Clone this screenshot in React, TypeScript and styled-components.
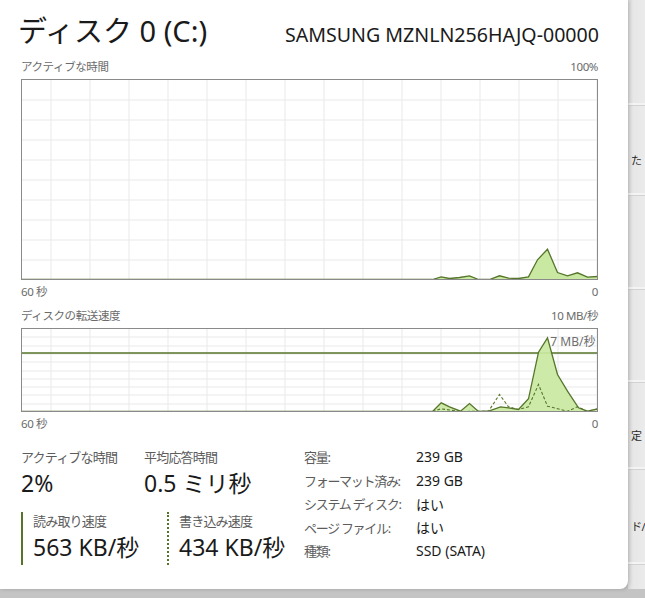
import styled, { createGlobalStyle } from 'styled-components';

const FONT = `"Noto Sans", "Noto Sans CJK JP", sans-serif`;
const GREEN_LINE = '#55752a';
const GREEN_FILL = '#c9e8a2';

const GlobalStyle = createGlobalStyle`
  html, body {
    margin: 0;
    padding: 0;
    background: #c4c4c4;
  }
  body {
    font-family: ${FONT};
    color: #1b1b1b;
  }
`;

type Pt = [number, number];

const activePoints: Pt[] = [
  [0, 200], [411, 200], [419.7, 197.3], [428, 199], [438, 198], [448, 196.3], [457, 200],
  [468, 200], [478, 196.3], [487, 198.7], [497, 199], [507, 197.3], [516, 180.3],
  [526, 169.7], [536, 193], [546, 196.3], [556, 193.3], [566, 197.7], [576, 197],
];

const readPoints: Pt[] = [
  [0, 83], [411, 83], [419.7, 74.3], [428, 78.3], [439, 82.7], [448, 75], [457, 83],
  [468, 82.3], [479, 78.3], [487, 79.3], [497, 81], [507, 70.3], [517, 23.7],
  [526, 9.3], [536, 46], [546, 62.7], [557, 79.3], [566, 82.7], [576, 80.3],
];

const writePoints: Pt[] = [
  [411, 83], [419.7, 80.3], [428, 81.5], [439, 83], [467, 82.7], [478, 66], [487, 78.3],
  [497, 81], [507, 78.3], [517, 56], [526, 77.7], [546, 82.7], [556, 78.3], [566, 83],
  [576, 80.3],
];

const props = [
  { label: '容量:', value: '239 GB' },
  { label: 'フォーマット済み:', value: '239 GB' },
  { label: 'システム ディスク:', value: 'はい' },
  { label: 'ページ ファイル:', value: 'はい' },
  { label: '種類:', value: 'SSD (SATA)' },
];

const toStr = (pts: Pt[]) => pts.map(([x, y]) => `${x},${y}`).join(' ');

const Grid = ({ width, height, rows }: { width: number; height: number; rows: number }) => {
  const lines = [];
  for (let x = 29; x < width; x += 39) {
    lines.push(<line key={`v${x}`} x1={x + 0.5} y1={0} x2={x + 0.5} y2={height} />);
  }
  for (let i = 1; i < rows; i++) {
    const y = Math.round((height / rows) * i) + 0.5;
    lines.push(<line key={`h${i}`} x1={0} y1={y} x2={width} y2={y} />);
  }
  return (
    <g stroke="#e9e9e9" strokeWidth={1}>
      {lines}
    </g>
  );
};

const ActiveChart = () => (
  <ChartSvg width={577} height={201} viewBox="-0.5 -0.5 577 201">
    <Grid width={576} height={200} rows={10} />
    <polygon points={toStr([...activePoints, [576, 200]])} fill={GREEN_FILL} />
    <polyline points={toStr(activePoints)} fill="none" stroke={GREEN_LINE} strokeWidth={1.3} />
    <rect x={0} y={0} width={576} height={200} fill="none" stroke="#8a8a8a" />
  </ChartSvg>
);

const TransferChart = () => (
  <ChartSvg width={577} height={84} viewBox="-0.5 -0.5 577 84">
    <Grid width={576} height={83} rows={10} />
    <line x1={0} y1={24.5} x2={576} y2={24.5} stroke={GREEN_LINE} strokeWidth={1.4} />
    <text x={574} y={17} textAnchor="end" fontSize={12} fill="#6e6e6e" fontFamily={FONT}>
      7 MB/秒
    </text>
    <polygon points={toStr([...readPoints, [576, 83]])} fill={GREEN_FILL} opacity={0.92} />
    <polyline points={toStr(readPoints)} fill="none" stroke={GREEN_LINE} strokeWidth={1.3} />
    <polyline
      points={toStr(writePoints)}
      fill="none"
      stroke={GREEN_LINE}
      strokeWidth={1.1}
      strokeDasharray="3 2"
    />
    <rect x={0} y={0} width={576} height={83} fill="none" stroke="#8a8a8a" />
  </ChartSvg>
);

export default function App() {
  return (
    <>
      <GlobalStyle />
      <Screen>
        <Panel>
          <TitleRow>
            <Title>ディスク 0 (C:)</Title>
            <Model>SAMSUNG MZNLN256HAJQ-00000</Model>
          </TitleRow>

          <AxisRow>
            <span>アクティブな時間</span>
            <span>100%</span>
          </AxisRow>
          <ActiveChart />
          <AxisRow $gap>
            <span>60 秒</span>
            <span>0</span>
          </AxisRow>

          <AxisRow>
            <span>ディスクの転送速度</span>
            <span>10 MB/秒</span>
          </AxisRow>
          <TransferChart />
          <AxisRow $gap>
            <span>60 秒</span>
            <span>0</span>
          </AxisRow>

          <StatsArea>
            <StatsLeft>
              <StatRow>
                <Stat $width={123}>
                  <StatLabel>アクティブな時間</StatLabel>
                  <StatValue>2%</StatValue>
                </Stat>
                <Stat>
                  <StatLabel>平均応答時間</StatLabel>
                  <StatValue>0.5 ミリ秒</StatValue>
                </Stat>
              </StatRow>
              <StatRow>
                <Stat $width={146} $line="solid">
                  <StatLabel>読み取り速度</StatLabel>
                  <StatValue>563 KB/秒</StatValue>
                </Stat>
                <Stat $line="dotted">
                  <StatLabel>書き込み速度</StatLabel>
                  <StatValue>434 KB/秒</StatValue>
                </Stat>
              </StatRow>
            </StatsLeft>
            <PropTable>
              {props.map((p) => (
                <PropRow key={p.label}>
                  <PropLabel>{p.label}</PropLabel>
                  <PropValue>{p.value}</PropValue>
                </PropRow>
              ))}
            </PropTable>
          </StatsArea>
        </Panel>

        <Backdrop>
          <BackCard $h={106} />
          <BackCard $h={90}>
            <BackText>た</BackText>
          </BackCard>
          <BackCard $h={94} />
          <BackCard $h={93} />
          <BackCard $h={87}>
            <BackText>定</BackText>
          </BackCard>
          <BackCard $h={95}>
            <BackText>ド/</BackText>
          </BackCard>
        </Backdrop>
      </Screen>
    </>
  );
}

const Screen = styled.div`
  display: flex;
  width: 645px;
  height: 598px;
  overflow: hidden;
  background: #c4c4c4;
`;

const Panel = styled.div`
  position: relative;
  z-index: 1;
  flex: 0 0 627px;
  height: 589px;
  box-sizing: border-box;
  padding: 0 30px 0 21px;
  background: #ffffff;
  border-bottom-right-radius: 8px;
  box-shadow: 1px 0 4px rgba(0, 0, 0, 0.18);
  display: flex;
  flex-direction: column;
`;

const TitleRow = styled.div`
  display: flex;
  justify-content: space-between;
  align-items: baseline;
  height: 56px;
  padding-top: 11px;
  box-sizing: border-box;
`;

const Title = styled.div`
  margin-left: -3px;
  font-size: 29px;
  line-height: 40px;
  color: #1a1a1a;
`;

const Model = styled.div`
  font-size: 19.6px;
  line-height: 24px;
  color: #1a1a1a;
  margin-right: -1px;
`;

const AxisRow = styled.div<{ $gap?: boolean }>`
  display: flex;
  justify-content: space-between;
  font-size: 11.5px;
  letter-spacing: -0.4px;
  line-height: 22px;
  color: #6b6b6b;
  margin-top: ${({ $gap }) => ($gap ? '1px' : '0')};
  height: ${({ $gap }) => ($gap ? '24px' : '23px')};
`;

const ChartSvg = styled.svg`
  display: block;
  flex-shrink: 0;
`;

const StatsArea = styled.div`
  display: flex;
  margin-top: 11px;
`;

const StatsLeft = styled.div`
  display: flex;
  flex-direction: column;
  gap: 11px;
  width: 283px;
`;

const StatRow = styled.div`
  display: flex;
`;

const Stat = styled.div<{ $line?: 'solid' | 'dotted'; $width?: number }>`
  display: flex;
  flex-direction: column;
  width: ${({ $width }) => ($width ? `${$width}px` : 'auto')};
  box-sizing: border-box;
  padding-left: ${({ $line }) => ($line ? '10px' : '0')};
  border-left: ${({ $line }) => ($line ? `2px ${$line} ${GREEN_LINE}` : 'none')};
`;

const StatLabel = styled.div`
  font-size: 13px;
  line-height: 18px;
  color: #5c5c5c;
  letter-spacing: -0.8px;
`;

const StatValue = styled.div`
  font-size: 23px;
  line-height: 35px;
  color: #1a1a1a;
`;

const PropTable = styled.div`
  display: flex;
  flex-direction: column;
  margin-top: -3px;
`;

const PropRow = styled.div`
  display: grid;
  grid-template-columns: 112px auto;
  height: 23.5px;
  align-items: center;
`;

const PropLabel = styled.span`
  font-size: 13px;
  color: #5c5c5c;
  letter-spacing: -1.3px;
  white-space: nowrap;
`;

const PropValue = styled.span`
  font-size: 14px;
  color: #1a1a1a;
`;

const Backdrop = styled.div`
  flex: 1;
  height: 589px;
  overflow: hidden;
  display: flex;
  flex-direction: column;
  background: linear-gradient(90deg, #dadada 0%, #e7e7e7 30%, #ebebeb 100%);
`;

const BackCard = styled.div<{ $h: number }>`
  flex: 0 0 ${({ $h }) => $h}px;
  box-sizing: border-box;
  padding-top: 18px;
  border-bottom: 1px solid #d3d3d3;
  box-shadow: inset 0 -2px 0 #f4f4f4;
  display: flex;
  align-items: center;
`;

const BackText = styled.span`
  margin-left: 3px;
  white-space: nowrap;
  font-size: 11px;
  letter-spacing: -0.5px;
  color: #2a2a2a;
`;
